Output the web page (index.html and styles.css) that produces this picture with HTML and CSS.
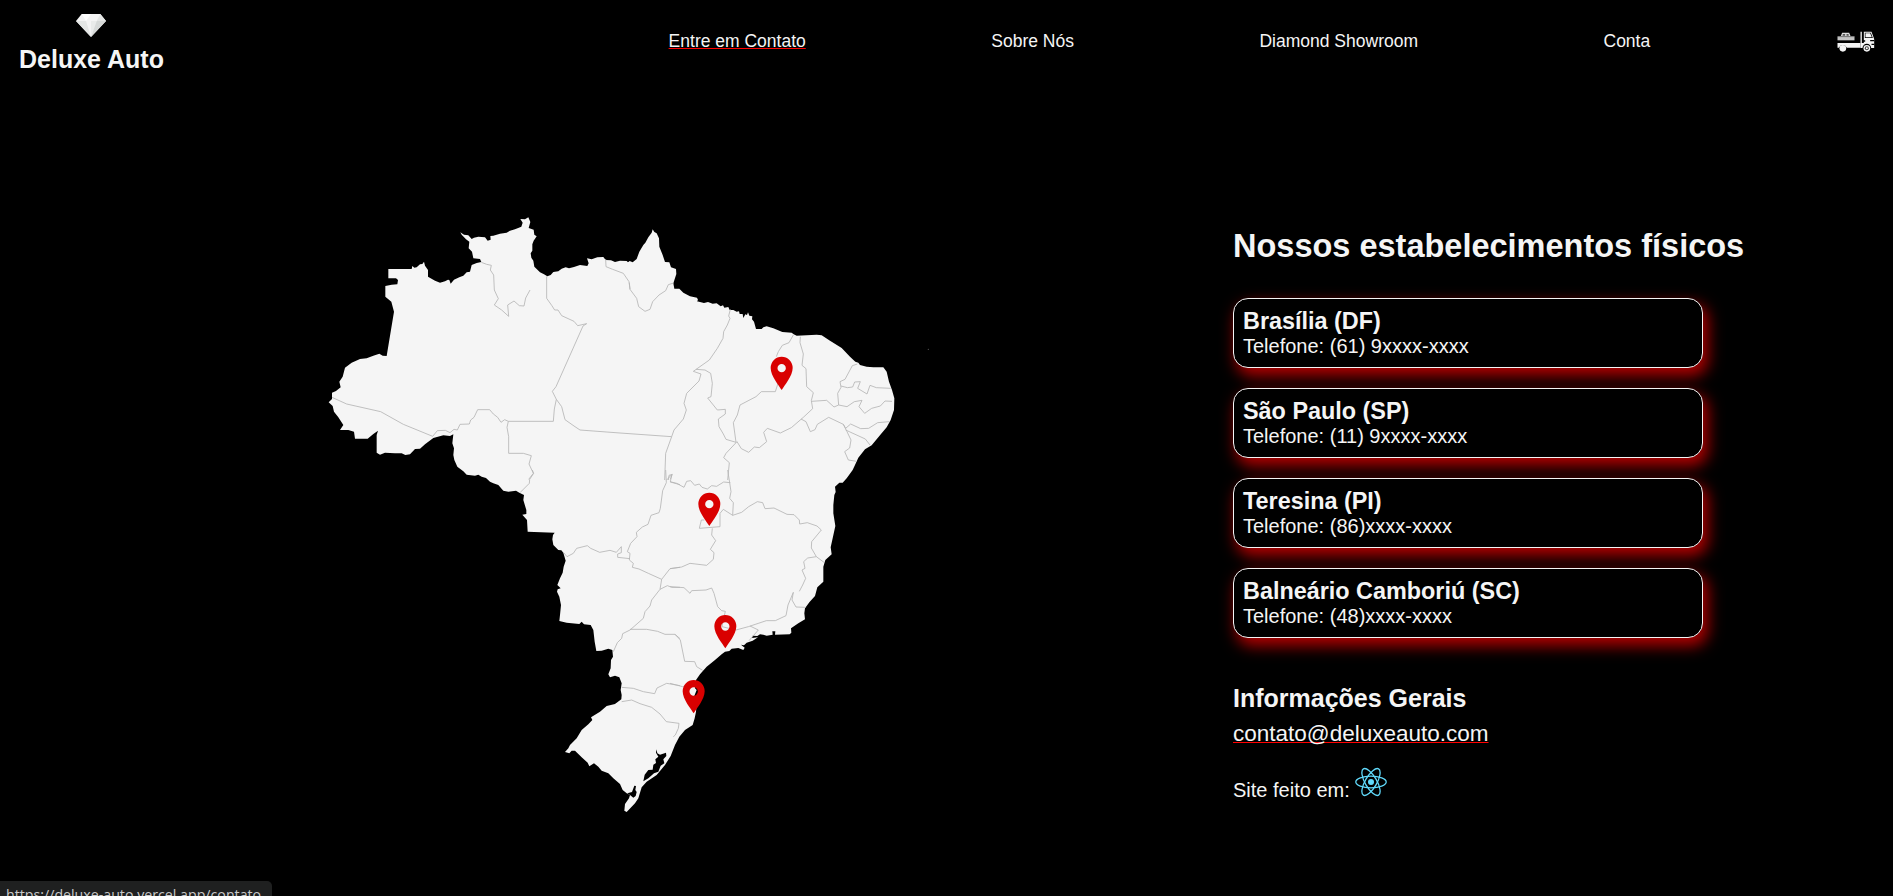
FILE: index.html
```html
<!DOCTYPE html>
<html lang="pt-BR">
<head>
<meta charset="utf-8">
<title>Deluxe Auto</title>
<link rel="stylesheet" href="styles.css">
</head>
<body>
<header class="header">
  <a class="logo">
    <svg class="diamond" viewBox="0 0 90 69"><path fill="#f4f4f4" d="M17 0H73L90 21 45 69 0 21Z"/><path fill="#e4e6e5" d="M0 21H30L45 69ZM73 0L90 21H62Z"/><path fill="#fff" d="M30 21L45 0 17 0Z"/><path fill="#e9ebea" d="M45 21H62L45 69Z"/><path fill="#d6d9d8" d="M62 21H90L45 69Z"/></svg>
    <span class="brand">Deluxe Auto</span>
  </a>
  <nav class="nav">
    <a class="link active">Entre em Contato</a>
    <a class="link">Sobre Nós</a>
    <a class="link">Diamond Showroom</a>
    <a class="link">Conta</a>
    <svg class="truck" viewBox="0 0 111 66">
      <g fill="#f5f5f5">
        <path d="M0 36H69V50H28A13 13 0 0 0 4 50H0Z"/>
        <path d="M69 2H73V36H79V2H102L110 24V51H101A13 13 0 0 0 75 51H69Z"/>
        <circle cx="16" cy="52" r="10"/><circle cx="88" cy="52" r="10"/>
        <path d="M10 15L14 5H35L39 15Z" fill="#ddd"/><path d="M0 16H51V28H0Z" fill="#c4c4c4"/>
      </g>
      <path d="M82 5H100L106 21H82ZM75 28H83V32H75ZM98 27H110V31H98ZM102 38H110V42H102Z"/>
      <path d="M84 7H98L103 19H84Z" fill="#f5f5f5"/>
      <path d="M16 9H23V14H15ZM27 9H33L34 14H27Z" fill="#555"/>
      <path d="M2 17H50" stroke="#777" stroke-width="2"/>
      <circle cx="88" cy="52" r="6" fill="#444"/><circle cx="88" cy="52" r="3" fill="#fff"/>
    </svg>
  </nav>
</header>

<main class="main">
  <svg class="map" viewBox="0 0 1860 1830">
    <defs>
      <path id="pin" fill="#d90000" fill-rule="evenodd" d="M0 0C-8-13-33-42-33-66A33 34 0 0 1 33-66C33-42 8-13 0 0ZM0-53A12.500 12.500 0 1 0 0-78A12.500 12.500 0 1 0 0-53Z"/>
    </defs>
    <path class="land" d="M601 27L615 28 625 22 631 36 626 54 641 59 643 74 650 79 641 92 637 103 637 122 632 130 634 143 640 152 643 170 660 187 672 193 682 199 692 195 700 186 715 184 725 176 737 172 747 175 762 171 780 165 802 168 806 160 801 145 815 148 832 142 850 141 857 150 873 151 885 156 900 152
      L920 153 924 157 929 153 938 157 950 147 958 125 970 105 976 98 985 82 995 68 998 58 1003 66 1010 70 1017 85 1018 110 1028 135 1035 156 1048 157 1053 172 1068 177 1069 192 1060 220 1063 236 1078 236 1090 248 1110 259 1131 263 1134 270 1131 274 1152 279 1164 276 1178 281 1190 280 1202 289 1209 286 1213 293 1225 291 1229 300 1240 300 1250 305 1257 304 1259 312 1268 312 1270 324 1276 313 1281 315 1284 307 1288 317 1297 319 1296 328 1302 335 1308 357 1325 357 1330 352 1340 349 1360 355 1387 366 1415 368 1421 373 1430 377 1460 376 1490 374 1505 376 1530 392 1565 414 1590 440 1606 455 1615 458 1620 465 1640 470 1660 472 1690 472 1700 485 1707 515 1716 540 1723 565 1722 600 1712 630 1700 652 1678 678 1655 706 1635 718 1615 743 1605 765 1598 780
      L1580 805 1568 818 1558 818 1545 830 1547 846 1543 855 1540 885 1540 910 1546 948 1538 985 1532 1012 1535 1033 1516 1050 1510 1070 1510 1115 1492 1132 1485 1158 1468 1177 1455 1195 1453 1210 1455 1228 1435 1240 1413 1255 1414 1268 1409 1273 1365 1274 1366 1264 1357 1264 1358 1274 1340 1277 1330 1274 1320 1273 1312 1278 1298 1277 1296 1284 1314 1282 1298 1292 1280 1298 1272 1306 1263 1304 1274 1313 1270 1320 1255 1314 1235 1316 1228 1323 1215 1325 1205 1333 1185 1350 1160 1370 1140 1393 1128 1410 1125 1435 1130 1440 1122 1460 1130 1480 1128 1505 1124 1525 1118 1545 1095 1560 1078 1580 1065 1605 1052 1638
      L1035 1665 1010 1695 980 1715 965 1732 955 1765 945 1780 920 1806 913 1802 915 1782 927 1765 930 1755 920 1750 908 1740 900 1722 880 1705 865 1690 845 1682 835 1670 822 1660 808 1669 803 1658 785 1642 765 1622 755 1622 748 1630 735 1626 745 1615 750 1605 770 1585 785 1560 805 1543 817 1530 813 1522 840 1505 860 1488 885 1482 904 1468 905 1455 902 1440 905 1420 898 1402 885 1397 870 1402 865 1393 872 1375 873 1350 879 1340 877 1320 865 1316 845 1322 829 1323 824 1295 820 1260 812 1245 792 1243 785 1235 778 1242 740 1238 718 1233 720 1215 723 1185 718 1160 711 1145 713 1138 722 1135 712 1125 720 1105 728 1088 731 1070 737 1052 730 1028 724 1021 715 1020 700 1005 697 988 699 975 704 968 623 965 621 930 607 914 619 912 619 900 616 890 610 870 612 855 598 848 588 842 565 845 550 842 535 825 520 820 510 815 498 804 485 800 475 794 465 797 440 794
      430 784 412 770 403 750 400 735 402 715 397 700 400 673 390 678 370 676 340 684 315 703 300 716 285 717 270 733 256 735 245 730 225 730 195 728 180 734 170 728 170 675 174 662 160 672 143 686 105 686 102 665 85 660 60 660 70 645 55 622 42 605 38 588 26 577 36 567 36 548 48 543 62 532 58 515 68 500 75 473 95 458 120 447 140 445 160 437 178 431 188 437 200 438 222 305 214 275 196 260 196 228 215 224 232 223 234 210 228 205 205 205 205 177 275 177 277 168 283 173 290 172 300 163 307 162 312 155 315 167 324 180 324 200 345 212 360 218 375 214 384 209 388 210 392 221 402 209 418 202 430 197 440 187 450 185 455 165 470 159 484 156 480 147 460 145 456 125 446 115 448 95 438 88 425 74 421 67 432 74 445 76 455 87 462 83 475 80 495 82 503 92 512 89 511 78 520 77 530 74 540 71 560 68 570 62 585 58 604 50 608 38Z"/>
    <g class="water" transform="translate(330 780)">
      <path d="M679 838L682 850 690 854 699 851 708 848 709 858 700 868 703 880 692 887 685 905 672 910 655 925 640 934 644 914 655 900 668 899 670 884 678 879 676 868 685 860 678 848Z"/>
      <path d="M592 970L606 966 613 947 618 948 616 960 620 966 617 978 610 983 600 975Z"/>
    </g>
    <g class="borders">
      <path d="M36 562L80 582 182 605 250 643 338 679 352 662 376 661 390 668 402 658 412 660 420 643 448 642 452 630 462 622 473 599H509L520 612 533 622 543 637 554 629 565 634H700L703 597 709 568 697 544 708 530 789 348 800 341 773 347 762 334 725 317 714 300 704 300 695 286 680 265V199M484 157L500 163 514 166 511 180 521 195 523 240 535 266 523 285 545 300 566 319 563 285 582 273 598 287 612 288 617 264 630 240M857 147L858 170 878 178 910 190 927 215 930 238M565 634L561 652 566 680 566 730H610L634 737 627 762 640 790 626 808M709 568L725 590 735 629 762 648 780 660 900 669"/>
      <g transform="translate(900)">
        <path d="M28 218L30 238 50 265 56 290 75 304 90 298 98 275 117 255 137 242 145 224 161 219M331 298L326 318 330 325 322 345 311 365 309 385 292 415 268 450 220 484 243 492 237 513 200 550 192 580 199 600 190 627 162 660 155 680 137 730 134 810M0 669L155 680M228 478L255 480 272 490 277 520 273 560 263 564 292 600 316 598 316 612 295 627 297 650 310 672 318 688 348 697 340 638 352 615 360 585 408 560 424 545 466 545 474 520M469 440L475 425 487 406 507 398 520 375M541 380L540 398 550 432 546 466 558 476 560 530 580 548 574 572 578 596 550 622 514 653 481 669 442 655 431 667 440 695 418 713 403 711 386 727 364 716 351 695 318 730 311 743 328 758 323 810M574 574L620 571 642 591 656 585 653 550 663 532 660 515 675 508 697 467 712 462M663 528L682 533 698 531 704 516 721 515 713 535 741 552 750 526 769 533 812 535M656 585L681 590 703 575 726 571 717 590 734 610 755 595 781 588 795 573 816 574M543 627L558 635 571 665 585 659 592 643 626 622 670 643 677 655 692 642 722 656 746 655 773 638 808 635M670 643L681 665 693 690 689 714 674 725 685 750 710 754M677 660L736 687 750 705M145 810L147 796 157 793 151 808"/>
      </g>
      <g transform="translate(330 780)">
        <path d="M307 0L311 10 299 28 298 40 270 68M401 248L411 260 430 250 440 235 472 227 482 235 509 247 540 241 559 247 574 230 574 248 563 252 563 262 600 266M707 0L709 38 698 62 691 115 687 128 663 136 654 163 637 171 619 187 621 200 602 220 592 245 600 250 598 270 610 280 607 292 627 297 655 310 695 328 720 296 750 292M695 328L690 358 665 390 660 408 645 425 640 445 600 480 578 491 575 505 562 518 550 545M600 478L650 478 683 484 705 493H735L750 506M690 358L712 347 726 352 750 352M575 652L610 655 640 665 674 671 681 654 710 640 750 647M575 695L605 690 630 701 665 712 690 732 709 755 747 760 745 775 736 795 730 800M710 30L725 14 721 36 750 44"/>
      </g>
      <g transform="translate(1050 780)">
        <path d="M0 35L20 40 42 52 50 34 62 32 74 46 88 42 96 52 112 57 125 47 140 49 161 36 181 38M173 0L179 38 183 65 179 85 190 98 188 136 160 118 150 130 150 170 88 175 94 150 103 150M188 136L215 127 236 110 262 95 278 98 285 116 312 114 351 133 372 134 388 150 389 162 412 158 441 168 454 180 425 215 424 234 439 260 462 277M439 260L413 264 401 275 405 295 396 300 407 325 398 345 388 364M127 175L125 195 137 212 121 238 132 248 130 268 110 286 60 280 35 291 0 296M0 350L42 353 60 370 65 362 108 360 125 354 132 370 143 410 155 422 166 424 160 450 156 470 198 480 235 470 289 452 316 452 348 437 354 405 370 367 366 390 378 411 407 412M240 468L265 480 237 512M15 493L31 510 44 574 74 575 80 590 98 601M0 640L38 650 55 645"/>
      </g>
    </g>
    <use href="#pin" x="1385" y="540"/>
    <use href="#pin" x="1168" y="948"/>
    <use href="#pin" x="1216" y="1315"/>
    <use href="#pin" x="1121" y="1510"/>
    <circle cx="1825" cy="418" r="2" fill="#555"/>
  </svg>

  <section class="info">
    <h1 class="title">Nossos estabelecimentos físicos</h1>
    <ul class="stores">
      <li class="store"><h2 class="city">Brasília (DF)</h2><p class="phone">Telefone: (61) 9xxxx-xxxx</p></li>
      <li class="store"><h2 class="city">São Paulo (SP)</h2><p class="phone">Telefone: (11) 9xxxx-xxxx</p></li>
      <li class="store"><h2 class="city">Teresina (PI)</h2><p class="phone">Telefone: (86)xxxx-xxxx</p></li>
      <li class="store"><h2 class="city">Balneário Camboriú (SC)</h2><p class="phone">Telefone: (48)xxxx-xxxx</p></li>
    </ul>
    <h2 class="general">Informações Gerais</h2>
    <a class="email">contato@deluxeauto.com</a>
    <p class="made"><span>Site feito em:</span>
      <svg class="react" viewBox="-16 -15 32 30"><g fill="none" stroke="#61dafb" stroke-width="1.300"><ellipse rx="15.200" ry="5.800"/><ellipse rx="15.200" ry="5.800" transform="rotate(60)"/><ellipse rx="15.200" ry="5.800" transform="rotate(120)"/></g><circle r="3" fill="#61dafb"/></svg>
    </p>
  </section>
</main>
<div class="status">https://deluxe-auto.vercel.app/contato</div>
</body>
</html>
```
FILE: styles.css
```css
* { box-sizing: border-box; margin: 0; padding: 0; }
body {
  height: 896px;
  overflow: hidden;
  background: #000;
  color: #f5f5f5;
  font-family: "Liberation Sans", Arial, sans-serif;
}
.header {
  display: flex;
  justify-content: space-between;
  height: 82px;
  padding: 14px 18px 0 19px;
}
.logo { display: flex; flex-direction: column; align-items: center; }
.diamond { width: 30px; height: 23px; }
.brand { margin-top: 8px; font-size: 25px; font-weight: bold; line-height: 29px; white-space: nowrap; }
.nav { display: flex; align-items: center; gap: 185.5px; height: 54px; }
.link { font-size: 17.5px; line-height: 20px; white-space: nowrap; }
.active { text-decoration: underline red 1px; text-underline-offset: 1px; text-decoration-skip-ink: none; }
.truck { width: 38px; height: 22px; margin: 1px 0 0 1.3px; }
.main { display: flex; align-items: flex-start; padding-left: 320px; }
.map { flex: none; width: 620px; height: 610px; margin-top: 128px; }
.land { fill: #f5f5f5; }
.water { fill: #000; }
.borders { fill: none; stroke: #b4b4b4; stroke-width: 2.5; stroke-linejoin: round; }
.info { flex: none; margin: 145px 0 0 293px; }
.title { font-size: 32.5px; line-height: 38px; white-space: nowrap; }
.stores { display: grid; gap: 20px; width: 470px; margin-top: 33px; list-style: none; }
.store {
  height: 70px;
  padding: 9px 9px 0;
  border: 1px solid #f5f5f5;
  border-radius: 15px;
  background: #000;
  box-shadow: 4px 7px 15px 1px #b00000;
}
.city { font-size: 23.4px; line-height: 27px; }
.phone { font-size: 20px; line-height: 23px; }
.general { margin-top: 46px; font-size: 25px; line-height: 29px; }
.email {
  display: inline-block;
  margin-top: 8px;
  font-size: 22.5px;
  line-height: 26px;
  text-decoration: underline red 1px;
  text-underline-offset: 1px;
  text-decoration-skip-ink: none;
}
.made { display: flex; align-items: flex-end; gap: 5px; margin-top: 20px; font-size: 20px; line-height: 23px; }
.react { width: 32px; height: 30px; margin-bottom: 5px; }
.status {
  position: absolute;
  left: 0;
  top: 881px;
  width: 272px;
  height: 15px;
  overflow: hidden;
  padding: 4px 6px;
  border-top-right-radius: 5px;
  background: #1f2020;
  color: #c8c8c8;
  font: 14.2px/20px "Open Sans", sans-serif;
  white-space: nowrap;
}
```
